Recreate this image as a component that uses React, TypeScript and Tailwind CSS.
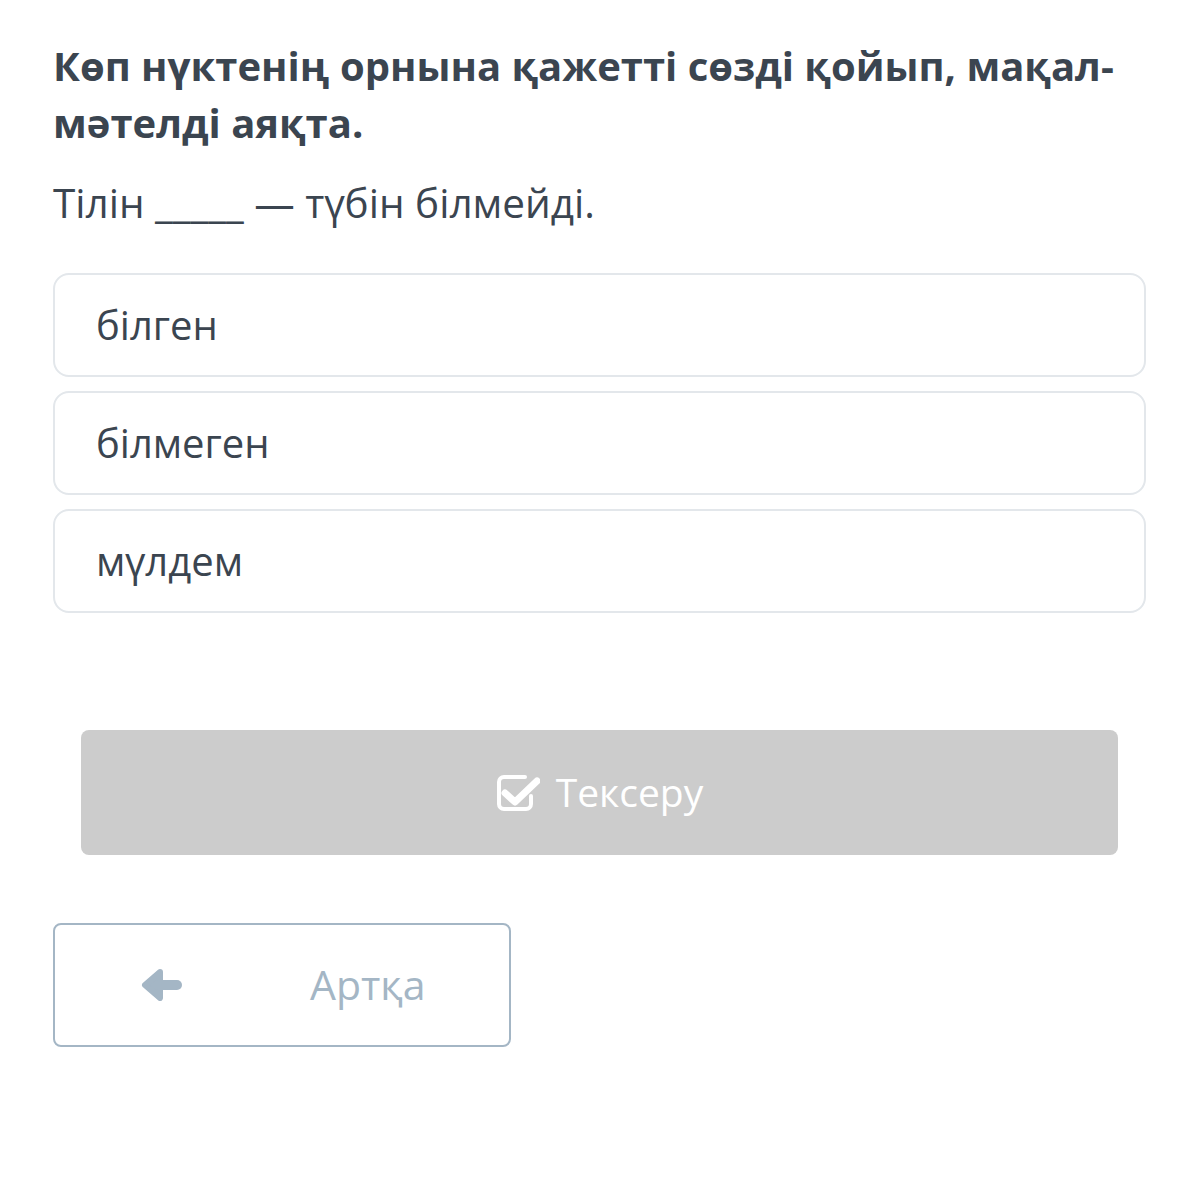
const options = ["білген", "білмеген", "мүлдем"];

function CheckSquareIcon() {
  return (
    <svg width="44" height="38" viewBox="0 0 44 38" fill="none">
      <path
        d="M35 22v8a5 5 0 0 1-5 5H8a5 5 0 0 1-5-5V8a5 5 0 0 1 5-5h21"
        stroke="white"
        strokeWidth="4"
        strokeLinecap="round"
      />
      <path
        d="M9 19l10 9L41 7"
        stroke="white"
        strokeWidth="7"
        strokeLinecap="round"
        strokeLinejoin="round"
      />
    </svg>
  );
}

function ArrowLeftIcon() {
  return (
    <svg width="44" height="32" viewBox="0 0 44 32" fill="none">
      <path d="M20 3L5 16l15 13z" fill="#a4b6c5" stroke="#a4b6c5" strokeWidth="6" strokeLinejoin="round" />
      <path d="M18 16h19" stroke="#a4b6c5" strokeWidth="10" strokeLinecap="round" />
    </svg>
  );
}

export default function App() {
  return (
    <div className="min-h-[1200px] bg-white px-[53px] pt-[37px] font-['Open_Sans',sans-serif] text-[#3b4550]">
      <h1 className="text-[40px] font-bold leading-[57px]">
        Көп нүктенің орнына қажетті сөзді қойып, мақал-мәтелді аяқта.
      </h1>

      <p className="mt-[27px] text-[40.5px] leading-[50px]">
        Тілін _____ — түбін білмейді.
      </p>

      <div className="mt-[45px] flex flex-col gap-[14px]">
        {options.map((option) => (
          <div
            key={option}
            className="flex h-[104px] items-center rounded-[16px] border-2 border-[#e3e7eb] px-[41px] text-[40px]"
          >
            {option}
          </div>
        ))}
      </div>

      <div className="mt-[117px] px-[28px]">
        <button className="flex h-[125px] w-full items-center justify-center gap-[16px] rounded-[8px] bg-[#cccccc] text-[39px] text-white">
          <CheckSquareIcon />
          <span>Тексеру</span>
        </button>
      </div>

      <button className="mt-[68px] flex h-[124px] w-[458px] items-center rounded-[8px] border-2 border-[#a4b6c5] text-[41px] text-[#a4b6c5]">
        <span className="ml-[85px] flex">
          <ArrowLeftIcon />
        </span>
        <span className="ml-[126px]">Артқа</span>
      </button>
    </div>
  );
}
